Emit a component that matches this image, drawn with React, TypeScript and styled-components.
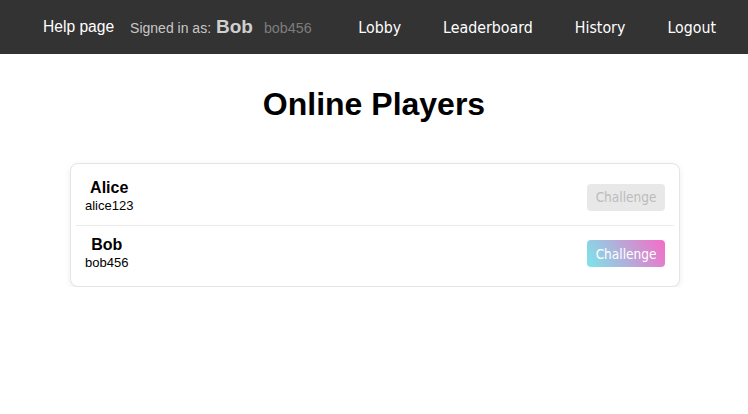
import { FC } from 'react';
import styled, { createGlobalStyle } from 'styled-components';

interface Player {
  name: string;
  username: string;
}

const players: Player[] = [
  { name: 'Alice', username: 'alice123' },
  { name: 'Bob', username: 'bob456' },
];

const currentUser = 'bob456';

const App: FC = () => {
  return (
    <>
      <GlobalStyle />
      <S.Nav>
        <S.Left>
          <S.NavLink>Help page</S.NavLink>
          <S.SignedIn>
            Signed in as: <S.SignedName>Bob</S.SignedName>
            <S.SignedUser>bob456</S.SignedUser>
          </S.SignedIn>
        </S.Left>
        <S.Right>
          <S.NavButton>Lobby</S.NavButton>
          <S.NavButton>Leaderboard</S.NavButton>
          <S.NavButton>History</S.NavButton>
          <S.NavButton>Logout</S.NavButton>
        </S.Right>
      </S.Nav>

      <S.Main>
        <S.Title>Online Players</S.Title>
        <S.Card>
          {players.map((player) => {
            const isSelf = player.username === currentUser;
            return (
              <S.Row key={player.username}>
                <S.Info>
                  <S.Name>{player.name}</S.Name>
                  <S.Username>{player.username}</S.Username>
                </S.Info>
                <S.Challenge disabled={!isSelf} $active={isSelf}>
                  Challenge
                </S.Challenge>
              </S.Row>
            );
          })}
        </S.Card>
      </S.Main>
    </>
  );
};

const GlobalStyle = createGlobalStyle`
  body {
    margin: 0;
    font-family: "Liberation Sans", Arial, sans-serif;
    background: #fff;
    color: #000;
  }
`;

const S = {
  Nav: styled.nav`
    height: 54px;
    background: #333333;
    display: flex;
    align-items: center;
    justify-content: space-between;
    padding: 0 32px 0 43px;
  `,
  Left: styled.div`
    display: flex;
    align-items: center;
    gap: 16px;
  `,
  NavLink: styled.a`
    color: #fff;
    font-size: 15.6px;
    cursor: pointer;
  `,
  SignedIn: styled.span`
    color: #c8c8c8;
    font-size: 14px;
  `,
  SignedName: styled.b`
    font-size: 19px;
    color: #cfcfcf;
    margin-left: 1px;
  `,
  SignedUser: styled.span`
    color: #7d7d7d;
    margin-left: 11px;
    font-size: 14.3px;
  `,
  Right: styled.div`
    display: flex;
    align-items: center;
    gap: 42px;
  `,
  NavButton: styled.button`
    background: none;
    border: none;
    padding: 0;
    color: #fff;
    font-family: "DejaVu Sans Condensed", "DejaVu Sans", sans-serif;
    font-size: 15.8px;
    cursor: pointer;
  `,
  Main: styled.main`
    display: flex;
    flex-direction: column;
    align-items: center;
  `,
  Title: styled.h1`
    font-size: 32px;
    font-weight: bold;
    margin: 32px 0 40px;
  `,
  Card: styled.div`
    width: 598px;
    margin-left: 2px;
    padding: 5px;
    border: 1px solid #e4e4e4;
    border-radius: 8px;
    box-shadow: 0 2px 6px rgba(0, 0, 0, 0.08);
    background: #fff;
  `,
  Row: styled.div`
    box-sizing: border-box;
    height: 56px;
    display: flex;
    align-items: center;
    justify-content: space-between;
    padding: 0 9px;
    & + & {
      border-top: 1px solid #ececec;
    }
  `,
  Info: styled.div`
    display: flex;
    flex-direction: column;
    align-items: center;
    padding-bottom: 2px;
  `,
  Name: styled.span`
    font-size: 16px;
    font-weight: bold;
    line-height: 20px;
  `,
  Username: styled.span`
    font-size: 13px;
    line-height: 16px;
  `,
  Challenge: styled.button<{ $active: boolean }>`
    width: 78px;
    height: 27px;
    border: none;
    border-radius: 4px;
    font-family: "DejaVu Sans Condensed", "DejaVu Sans", sans-serif;
    font-size: 13.5px;
    padding: 0;
    color: ${(p) => (p.$active ? '#fff' : '#bcbcbc')};
    background: ${(p) =>
      p.$active
        ? 'linear-gradient(60deg, #7ae6ea 0%, #f66bc6 100%)'
        : '#e8e8e8'};
    cursor: ${(p) => (p.$active ? 'pointer' : 'default')};
  `,
};

export default App;
